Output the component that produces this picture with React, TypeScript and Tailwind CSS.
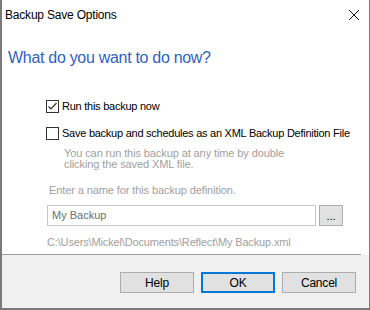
import React from "react";

function Box({ checked }: { checked?: boolean }) {
  return (
    <span className="flex h-[13px] w-[13px] shrink-0 items-center justify-center border border-[#333] bg-white">
      {checked && (
        <svg width="11" height="11" viewBox="0 0 11 11" fill="none">
          <path d="M1.5 5.5L4 8L9.5 2" stroke="#333" strokeWidth="1.2" />
        </svg>
      )}
    </span>
  );
}

function Btn({ label, primary }: { label: string; primary?: boolean }) {
  return (
    <button
      className={
        "h-[21px] w-[74px] bg-[#e1e1e1] text-[12px] tracking-[-0.2px] text-black " +
        (primary ? "border-2 border-[#0078d7]" : "border border-[#adadad]")
      }
    >
      {label}
    </button>
  );
}

export default function App() {
  return (
    <div className="flex h-[310px] w-[370px] flex-col border-b-2 border-l-2 border-r border-[#7a7a7a] bg-white font-['Liberation_Sans',Arial,sans-serif]">
      <div className="flex h-[30px] items-center justify-between pl-[3px] pr-[9px]">
        <span className="text-[12px] tracking-[-0.2px] text-black">Backup Save Options</span>
        <svg width="12" height="12" viewBox="0 0 12 12">
          <path d="M1 1L11 11M11 1L1 11" stroke="#111" strokeWidth="1" />
        </svg>
      </div>

      <div className="flex flex-1 flex-col">
        <div className="mt-[17px] pl-[6px] text-[16px] leading-[22px] tracking-[-0.3px] text-[#2f5fc0]">
          What do you want to do now?
        </div>

        <div className="mt-[29px] flex items-center gap-[3px] pl-[44px]">
          <Box checked />
          <span className="whitespace-nowrap text-[11px] leading-[16px] tracking-[-0.25px] text-black">
            Run this backup now
          </span>
        </div>
        <div className="mt-[11px] flex items-center gap-[3px] pl-[44px]">
          <Box />
          <span className="whitespace-nowrap text-[11px] leading-[16px] tracking-[-0.25px] text-black">
            Save backup and schedules as an XML Backup Definition File
          </span>
        </div>
        <div className="mt-[7px] pl-[62px] text-[11px] leading-[11px] tracking-[-0.1px] text-[#a0a0a0]">
          You can run this backup at any time by double
          <br />
          clicking the saved XML file.
        </div>

        <div className="mt-[13px] pl-[47px] text-[11px] leading-[14px] tracking-[-0.1px] text-[#a0a0a0]">
          Enter a name for this backup definition.
        </div>
        <div className="mt-[8px] flex items-center gap-[3px] pl-[45px]">
          <div className="flex h-[21px] w-[269px] items-center border border-[#c8c8c8] bg-white pl-[4px] text-[11px] text-[#6d6d6d]">
            My Backup
          </div>
          <button className="flex h-[21px] w-[24px] items-end justify-center border border-[#adadad] bg-[#e1e1e1] pb-[5px] text-[11px] leading-[8px] text-black">
            ...
          </button>
        </div>
        <div className="mt-[9px] pl-[45px] text-[11px] leading-[14px] tracking-[-0.15px] text-[#a0a0a0]">
          C:\Users\Mickel\Documents\Reflect\My Backup.xml
        </div>
      </div>

      <div className="mr-[8px] h-px bg-[#a0a0a0]" />
      <div className="flex h-[53px] items-start justify-end gap-[7px] bg-[#f0f0f0] pr-[13px] pt-[17px]">
        <Btn label="Help" />
        <Btn label="OK" primary />
        <Btn label="Cancel" />
      </div>
    </div>
  );
}
